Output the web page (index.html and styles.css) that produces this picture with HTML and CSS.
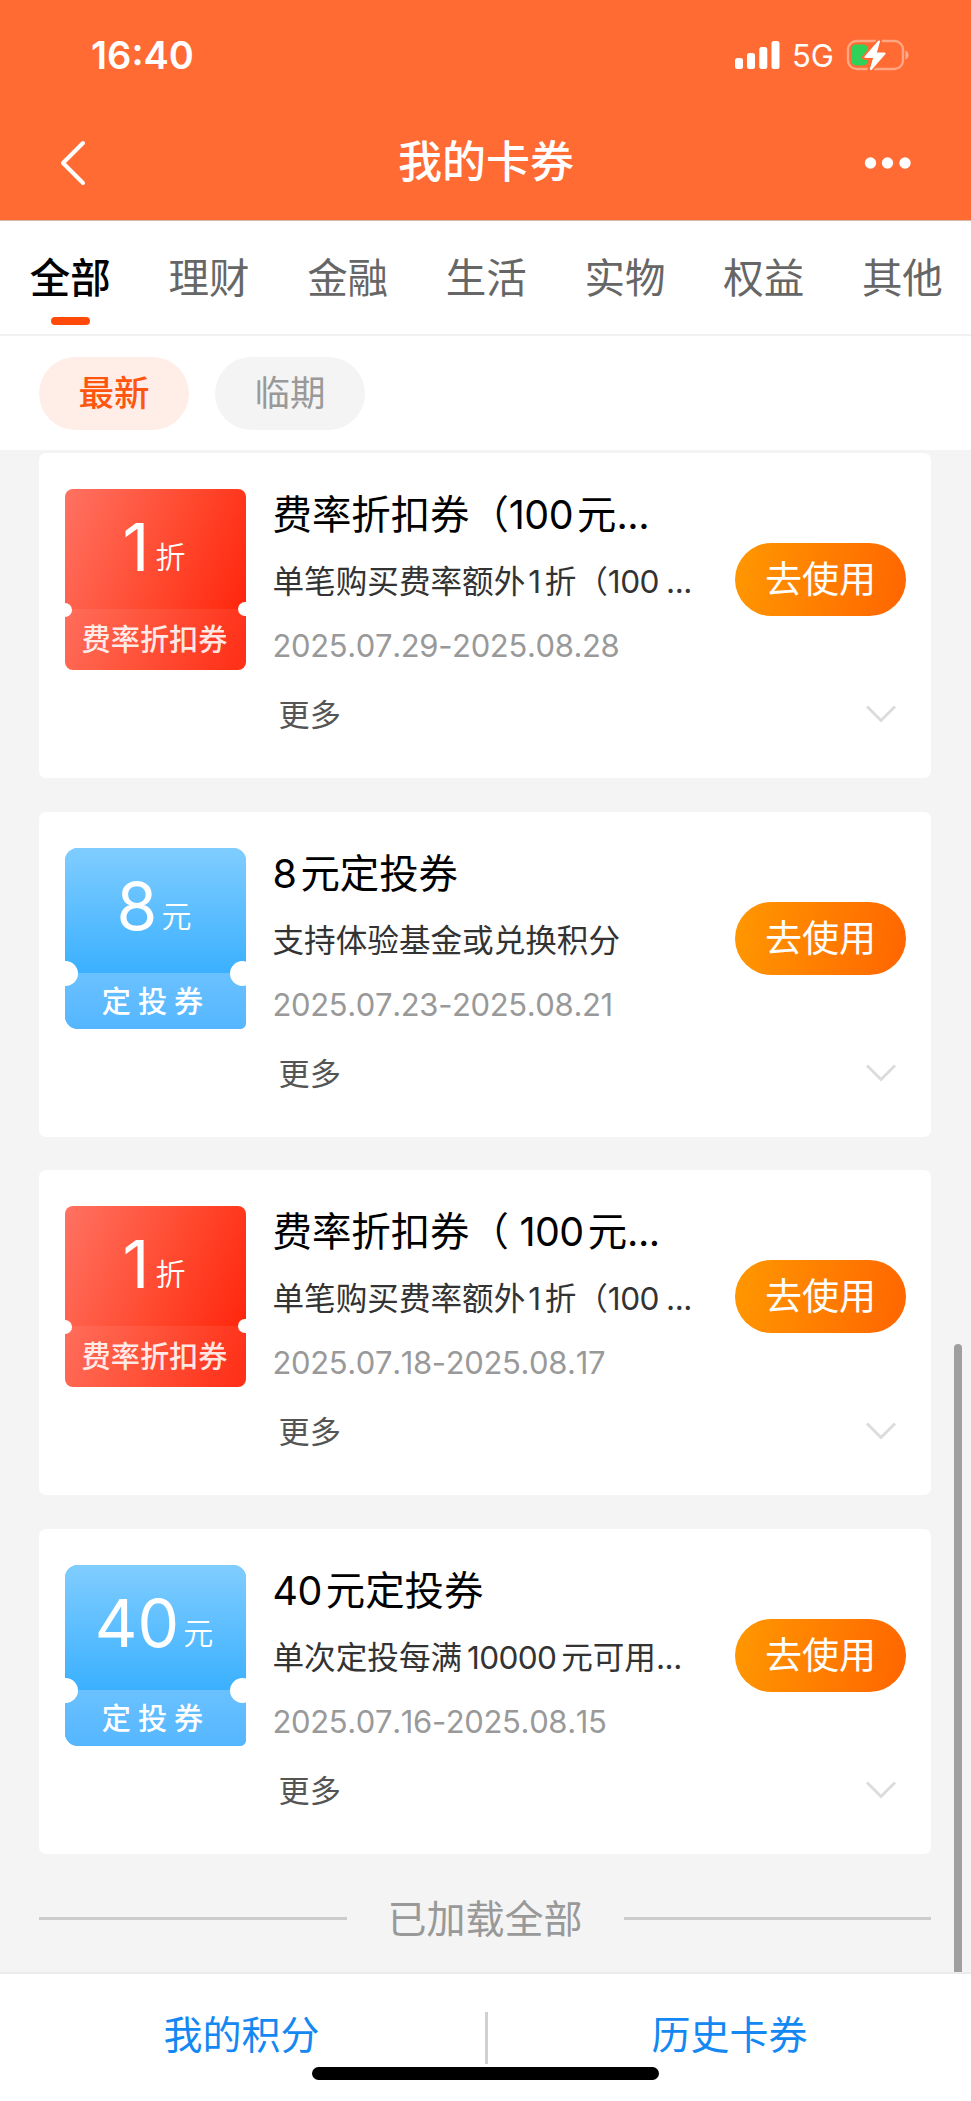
FILE: index.html
```html
<!DOCTYPE html>
<html lang="zh-CN">
<head>
<meta charset="utf-8">
<title>我的卡券</title>
<link rel="stylesheet" href="styles.css">
</head>
<body>
<div class="app">
  <header class="header">
    <div class="status">
      <span class="time">16:40</span>
      <div class="status-right">
        <svg class="signal" width="46" height="30" viewBox="0 0 46 30" fill="#fff"><rect x="0" y="18" width="8" height="11" rx="2.500"/><rect x="12" y="13" width="8" height="16" rx="2.500"/><rect x="24.300" y="7" width="8" height="22" rx="2.500"/><rect x="36.500" y="1" width="8" height="28" rx="2.500"/></svg>
        <span class="net">5G</span>
        <svg class="battery" width="64" height="34" viewBox="0 0 64 34"><rect x="2" y="3" width="55" height="28" rx="8.500" fill="none" stroke="#fff" stroke-opacity=".4" stroke-width="2.400"/><path d="M59.500 12.500q3 1.500 3 4.500t-3 4.500z" fill="#fff" fill-opacity=".45"/><rect x="5" y="6.500" width="17" height="21" rx="5" fill="#30d158"/><path d="M33.500 2.500 18.500 19.500h9l-3.500 12.500 15.500-17h-9z" fill="#fff" stroke="#ff6b33" stroke-width="5" paint-order="stroke" stroke-linejoin="round"/><path d="M33 3.500 19.500 19h9L25 31 38.500 15.500h-9z" fill="#fff" stroke="#fff" stroke-width="2" stroke-linejoin="round"/></svg>
      </div>
    </div>
    <nav class="nav">
      <svg class="back" width="26" height="46" viewBox="0 0 26 46" fill="none" stroke="#fff" stroke-width="4" stroke-linecap="round" stroke-linejoin="round"><path d="M23 3 3 23l20 20"/></svg>
      <h1 class="page-title">我的卡券</h1>
      <svg class="more" width="48" height="12" viewBox="0 0 48 12" fill="#fff"><circle cx="6.500" cy="6" r="5.700"/><circle cx="23.500" cy="6" r="5.700"/><circle cx="41" cy="6" r="5.700"/></svg>
    </nav>
  </header>

  <div class="tabs">
    <span class="tab active">全部</span><span class="tab">理财</span><span class="tab">金融</span><span class="tab">生活</span><span class="tab">实物</span><span class="tab">权益</span><span class="tab">其他</span>
  </div>
  <div class="filters">
    <span class="chip on">最新</span><span class="chip">临期</span>
  </div>

  <main class="list">
    <article class="card">
      <div class="ticket red">
        <div class="amount"><b>1</b><i>折</i></div>
        <div class="kind">费率折扣券</div>
      </div>
      <div class="info">
        <h2 class="name">费率折扣券（<span class="num">100</span>元<span class="dots">...</span></h2>
        <p class="desc">单笔购买费率额外<span class="num one">1</span>折（<span class="num last">100</span><span class="dots">...</span></p>
        <p class="date">2025.07.29-2025.08.28</p>
        <p class="extra">更多</p>
      </div>
      <div class="side">
        <span class="use">去使用</span>
        <svg class="chev" width="32" height="20" viewBox="0 0 32 20" fill="none" stroke="#dcdcdc" stroke-width="3"><path d="M2 2.500 16 16.500l14-14"/></svg>
      </div>
    </article>
    <article class="card">
      <div class="ticket blue">
        <div class="amount"><b>8</b><i>元</i></div>
        <div class="kind">定投券</div>
      </div>
      <div class="info">
        <h2 class="name"><span class="num">8</span>元定投券</h2>
        <p class="desc">支持体验基金或兑换积分</p>
        <p class="date">2025.07.23-2025.08.21</p>
        <p class="extra">更多</p>
      </div>
      <div class="side">
        <span class="use">去使用</span>
        <svg class="chev" width="32" height="20" viewBox="0 0 32 20" fill="none" stroke="#dcdcdc" stroke-width="3"><path d="M2 2.500 16 16.500l14-14"/></svg>
      </div>
    </article>
    <article class="card">
      <div class="ticket red">
        <div class="amount"><b>1</b><i>折</i></div>
        <div class="kind">费率折扣券</div>
      </div>
      <div class="info">
        <h2 class="name">费率折扣券（<span class="num"> 100</span>元<span class="dots">...</span></h2>
        <p class="desc">单笔购买费率额外<span class="num one">1</span>折（<span class="num last">100</span><span class="dots">...</span></p>
        <p class="date">2025.07.18-2025.08.17</p>
        <p class="extra">更多</p>
      </div>
      <div class="side">
        <span class="use">去使用</span>
        <svg class="chev" width="32" height="20" viewBox="0 0 32 20" fill="none" stroke="#dcdcdc" stroke-width="3"><path d="M2 2.500 16 16.500l14-14"/></svg>
      </div>
    </article>
    <article class="card">
      <div class="ticket blue">
        <div class="amount"><b>40</b><i>元</i></div>
        <div class="kind">定投券</div>
      </div>
      <div class="info">
        <h2 class="name"><span class="num">40</span>元定投券</h2>
        <p class="desc">单次定投每满<span class="num lead">10000</span>元可用<span class="dots">...</span></p>
        <p class="date">2025.07.16-2025.08.15</p>
        <p class="extra">更多</p>
      </div>
      <div class="side">
        <span class="use">去使用</span>
        <svg class="chev" width="32" height="20" viewBox="0 0 32 20" fill="none" stroke="#dcdcdc" stroke-width="3"><path d="M2 2.500 16 16.500l14-14"/></svg>
      </div>
    </article>
    <div class="end"><span>已加载全部</span></div>
  </main>

  <footer class="footer">
    <a class="link">我的积分</a>
    <span class="split"></span>
    <a class="link">历史卡券</a>
  </footer>
  <div class="scrollbar"></div>
  <div class="home"></div>
</div>
</body>
</html>
```

FILE: styles.css
```css
* { box-sizing: border-box; }
body, h1, h2, p { margin: 0; font-weight: 400; }
body { font-family: Inter, "Noto Sans CJK SC", sans-serif; background: #f4f4f4; }
svg { display: block; flex: none; }
.app { position: relative; width: 971px; height: 2101px; overflow: hidden; display: flex; flex-direction: column; }

.header { flex: none; height: 221px; background: #ff6b33; border-bottom: 1px solid #dcb8a8; color: #fff; }
.status { height: 110px; padding: 0 61px 0 91px; display: flex; align-items: center; justify-content: space-between; }
.time { font-size: 38px; font-weight: 600; line-height: 46px; }
.status-right { display: flex; align-items: center; }
.net { font-size: 31px; line-height: 36px; margin: 2px 12px 0 11px; }
.nav { height: 110px; padding: 0 59px 4px 60px; display: flex; align-items: center; justify-content: space-between; }
.back { margin-right: 22px; }
.page-title { font-size: 44px; font-weight: 500; line-height: 60px; margin-top: -2px; }

.tabs { flex: none; height: 115px; background: #fff; border-bottom: 2px solid #f2f2f2; display: flex; gap: 57.200px; padding: 26px 0 0 29.500px; }
.tab { flex: none; width: 81.500px; font-size: 40.500px; line-height: 64px; color: #666; display: flex; flex-direction: column; align-items: center; white-space: nowrap; }
.tab.active { color: #000; font-weight: 500; }
.tab.active::after { content: ""; width: 39px; height: 8px; border-radius: 4px; background: #ff4a0a; margin-top: 6px; }

.filters { flex: none; height: 114px; background: #fff; display: flex; gap: 26px; padding: 21px 39px; }
.chip { width: 150px; height: 73px; border-radius: 37px; background: #f4f4f4; color: #999; font-size: 35.500px; line-height: 74px; text-align: center; }
.chip.on { background: #ffeee7; color: #ff560f; font-weight: 500; }

.list { flex: 1; min-height: 0; padding: 3px 40px 0 39px; display: flex; flex-direction: column; gap: 33.700px; }
.card { flex: none; height: 325px; border-radius: 7px; background: #fff; display: flex; padding: 36px 25px 0 26px; }

.ticket { position: relative; flex: none; width: 181px; height: 181px; overflow: hidden; border-radius: 8px; color: #fff; display: flex; flex-direction: column; }
.ticket::before, .ticket::after { content: ""; position: absolute; background: #fff; border-radius: 50%; }
.red { background: linear-gradient(112deg, #ff7262 0%, #ff4a30 50%, #ff2208 95%); }
.red::before { width: 14px; height: 14px; left: -7px; top: 114px; }
.red::after { width: 14px; height: 14px; right: -6px; top: 113px; }
.blue { border-radius: 13px 13px 6px 13px; background: #5ebbff; }
.blue::before { width: 25px; height: 25px; left: -12.500px; top: 113px; }
.blue::after { width: 25px; height: 25px; right: -8.500px; top: 113px; }
.amount { height: 120px; padding-right: 3px; display: flex; justify-content: center; align-items: baseline; line-height: 117px; }
.blue .amount { height: 125px; background: linear-gradient(#80cdff, #3bb0ff); }
.amount b { font-size: 66px; font-weight: 400; }
.amount i { font-size: 30px; font-style: normal; font-weight: 350; margin-left: 6px; transform: translateY(-3px); }
.blue .amount i { margin-left: 4px; }
.kind { flex: 1; text-align: center; font-size: 29.200px; font-weight: 500; line-height: 62px; background: rgba(255,255,255,.07); color: rgba(255,255,255,.88); white-space: nowrap; padding-right: 2px; }
.blue .kind { background: linear-gradient(#6ac1ff, #54b6ff); color: #fff; line-height: 58px; letter-spacing: 7px; text-indent: 3px; }

.info { flex: 1; min-width: 0; padding-left: 26.500px; white-space: nowrap; }
.name { font-size: 39.400px; line-height: 52px; color: #000; }
.num { margin-right: 4px; letter-spacing: -.5px; white-space: pre; }
.desc { font-size: 31.600px; line-height: 44px; color: #333; margin-top: 19px; }
.desc .one { margin: 0 4px 0 3px; }
.desc .last { margin-right: 7px; }
.desc .lead { margin: 0 5px 0 5px; letter-spacing: -.7px; }
.dots { letter-spacing: -.5px; }
.date { font-size: 31px; line-height: 40px; color: #999; margin-top: 22px; font-kerning: none; letter-spacing: -.36px; }
.extra { font-size: 31.200px; line-height: 44px; color: #555; margin-top: 27px; padding-left: 6px; }

.side { flex: none; width: 171px; padding-top: 54px; }
.use { display: block; height: 73px; border-radius: 37px; background: linear-gradient(100deg, #ff9800, #ff6500); color: #fff; font-size: 37px; line-height: 74px; text-align: center; }
.chev { margin: 88px 0 0 130px; }

.end { display: flex; align-items: center; gap: 41px; height: 62px; color: #999; font-size: 39px; line-height: 60px; }
.end::before, .end::after { content: ""; flex: 1; height: 3px; background: #ccc; }

.footer { flex: none; height: 129px; background: #fff; border-top: 2px solid #ebebeb; display: flex; align-items: flex-start; padding-top: 38px; }
.link { flex: 1; text-align: center; color: #1488f2; font-size: 39px; line-height: 46px; }
.split { width: 3px; height: 52px; background: #d0d0d0; margin-left: 2px; }
.scrollbar { position: absolute; left: 954px; top: 1344px; width: 8px; height: 628px; border-radius: 4px 4px 0 0; background: #9f9f9f; }
.home { position: absolute; left: 312px; top: 2067px; width: 347px; height: 13px; border-radius: 7px; background: #000; }
```
